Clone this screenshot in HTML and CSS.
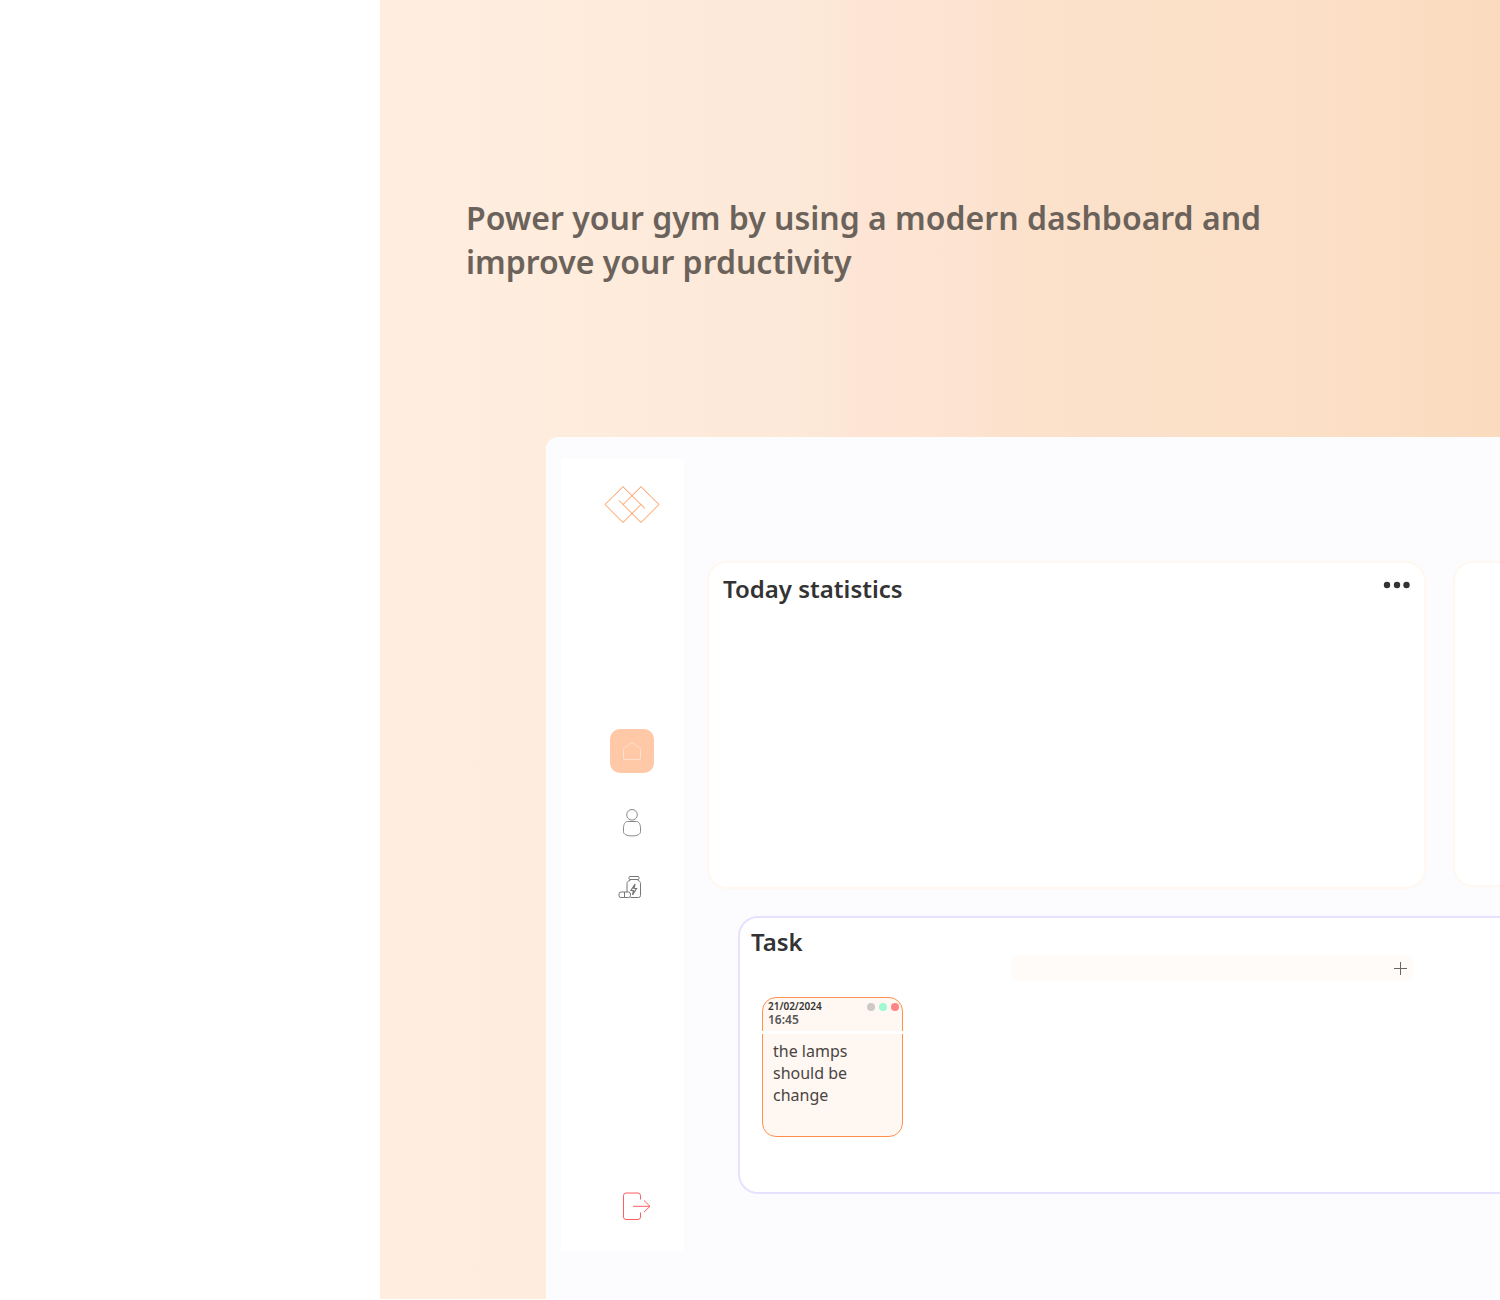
FILE: index.html
```html
<!DOCTYPE html>
<html lang="en">
<head>
<meta charset="utf-8">
<meta name="viewport" content="width=device-width, initial-scale=1">
<title>Gym dashboard</title>
<link rel="stylesheet" href="styles.css">
</head>
<body>
<div class="page">
  <div class="stage">
    <h1 class="headline">Power your gym by using a modern dashboard and improve your prductivity</h1>
    <div class="app">
      <aside class="sidebar">
        <a class="logo" href="#" aria-label="Home page">
          <svg width="56" height="38" viewBox="0 0 56 38" fill="none" stroke="#ff914d" stroke-width="1">
            <path d="M41 22.500L19 .7L1 18.500L19 36.500L37 18.500"/>
            <path d="M15 14.500L37 36.500L55 18.500L37 .7L19 18.500"/>
          </svg>
        </a>
        <nav class="nav">
          <a class="nav-link nav-active" href="#" aria-label="Home">
            <svg width="20" height="20" viewBox="0 0 20 20" fill="none" stroke="#ffe0cc" stroke-width="1">
              <path d="M1.500 7.500L9 2q1-.8 2 0l7.500 5.500v10q0 1-1 1h-15q-1 0-1-1z"/>
            </svg>
          </a>
          <a class="nav-link" href="#" aria-label="Members">
            <svg width="20" height="28" viewBox="0 0 20 28" fill="none" stroke="#888" stroke-width="1">
              <circle cx="10" cy="5.800" r="5.300"/>
              <path d="M5.500 12.500h9c2.500 0 4 3 4 6.700v3.500c0 2.500-3 4.200-8.500 4.200s-8.500-1.700-8.500-4.200v-3.500c0-3.700 1.500-6.700 4-6.700z"/>
            </svg>
          </a>
          <a class="nav-link" href="#" aria-label="Supplements">
            <svg class="bottle" width="24" height="24" viewBox="0 0 24 24" fill="none" stroke="#777" stroke-width="1">
              <rect x="11" y="1.500" width="10" height="3" rx="1"/>
              <path d="M12 4.500v1c-2 .3-3 1.500-3 3v8.500M20 4.500v1c1.500.3 2.500 1.500 2.500 3v12q0 2-2 2h-8"/>
              <path d="M17 9l-4 6.500h2.500l-1 4.500 4-6.500h-2.500z" stroke-width="1.200"/>
              <rect x="1" y="17" width="11.500" height="5.500" rx="2"/>
              <path d="M6.500 17v5.500"/>
            </svg>
          </a>
        </nav>
        <a class="logout" href="#" aria-label="Log out">
          <svg width="30" height="30" viewBox="0 0 30 30" fill="none" stroke="#ff5f62" stroke-width="1">
            <path d="M18.500 8.500v-4q0-2.500-2.500-2.500h-12q-2.500 0-2.500 2.500v21.500q0 2.500 2.500 2.500h12q2.500 0 2.500-2.500v-4.500"/>
            <path d="M11 15.300h17M22 9.500l6 5.800-6 5.800"/>
          </svg>
        </a>
      </aside>
      <main class="main">
        <div class="stats-row">
          <section class="card stats">
            <h2 class="card-title">Today statistics</h2>
            <button class="more" type="button" aria-label="More options">
              <svg width="28" height="8" viewBox="0 0 28 8" fill="#333">
                <circle cx="4" cy="4" r="3.200"/><circle cx="14" cy="4" r="3.200"/><circle cx="23.500" cy="4" r="3.200"/>
              </svg>
            </button>
          </section>
          <section class="card next-card"></section>
        </div>
        <section class="tasks">
          <div class="tasks-head">
            <h2 class="card-title">Task</h2>
            <form class="add-bar">
              <input class="add-input" type="text" aria-label="New task">
              <button class="add-button" type="button" aria-label="Add task">
                <svg width="14" height="14" viewBox="0 0 14 14" fill="none" stroke="#666" stroke-width="1"><path d="M7.500 1v13M1 7.500h13"/></svg>
              </button>
            </form>
          </div>
          <article class="note">
            <header class="note-head">
              <div class="note-when">
                <span class="note-date">21/02/2024</span>
                <span class="note-time">16:45</span>
              </div>
              <div class="dots">
                <span class="dot dot-gray"></span>
                <span class="dot dot-green"></span>
                <span class="dot dot-red"></span>
              </div>
            </header>
            <p class="note-text">the lamps should be change</p>
          </article>
        </section>
      </main>
    </div>
  </div>
</div>
</body>
</html>
```
FILE: styles.css
```css
* { box-sizing: border-box; }

body {
  margin: 0;
  background: #fff;
  color: #333;
  font-family: "Noto Sans", "Open Sans", sans-serif;
}

h1, h2, p { margin: 0; }
svg { display: block; }

.page {
  min-height: 100vh;
  padding: 0 0 1px 380px;
}

.stage {
  display: flex;
  flex-direction: column;
  min-height: calc(100vh - 1px);
  background: linear-gradient(90deg, #ffeee0 0%, #feecdd 16%, #fce8d7 40%, #fee4d4 43%, #fde4d2 52%, #fce2cc 56%, #fbdfc6 84%, #fadbbe 100%);
}

.headline {
  max-width: 920px;
  padding: 196px 0 0 86px;
  color: #6b635b;
  font-size: 32px;
  font-weight: 600;
  line-height: 44px;
}

.app {
  display: flex;
  flex: 1;
  margin: 153px 0 0 166px;
  padding: 22px 0 48px 15px;
  background: #fcfcff;
  border-top-left-radius: 12px;
}

.sidebar {
  display: flex;
  flex: 0 0 123px;
  flex-direction: column;
  align-items: center;
  padding: 27px 0 30px 19px;
  background: #fff;
}

.nav {
  display: flex;
  flex-direction: column;
  align-items: center;
  gap: 36px;
  margin-top: 205px;
}

.nav-link { min-height: 30px; }

.nav-active {
  display: grid;
  place-items: center;
  width: 44px;
  height: 44px;
  background: #ffc8a6;
  border-radius: 10px;
}

.bottle { margin-right: 5px; }

.logout {
  margin-top: auto;
  padding-left: 9px;
}

.main {
  flex: 1;
  min-width: 0;
  padding: 102px 0 0 23px;
}

.stats-row {
  display: flex;
  gap: 27px;
}

.card {
  min-height: 328px;
  background: #fff;
  border: 2px solid #fff8f0;
  border-radius: 20px;
}

.stats {
  display: flex;
  flex: 1;
  align-items: flex-start;
  justify-content: space-between;
  padding: 10px 13px 0 14px;
}

.next-card {
  flex: 0 0 47px;
  min-height: 326px;
  align-self: flex-start;
  border-right: 0;
  border-radius: 20px 0 0 20px;
}

.card-title {
  font-size: 24px;
  font-weight: 600;
  line-height: 32px;
}

button {
  padding: 0;
  background: none;
  border: 0;
}

.more { margin-top: 8px; }

.tasks {
  min-height: 278px;
  margin: 27px 0 0 31px;
  padding: 8px 0 0 11px;
  background: #fff;
  border: 2px solid #e8e0ff;
  border-right: 0;
  border-radius: 20px 0 0 20px;
}

.tasks-head {
  display: flex;
  align-items: flex-start;
  justify-content: space-between;
  padding-right: 86px;
}

.add-bar {
  display: flex;
  align-items: center;
  width: 403px;
  height: 28px;
  margin-top: 28px;
  padding-right: 7px;
  background: #fffbf8;
  border-radius: 8px;
}

.add-input {
  flex: 1;
  min-width: 0;
  background: none;
  border: 0;
  font: inherit;
}

.note {
  width: 141px;
  min-height: 140px;
  margin: 15px 0 0 11px;
  background: #fff7f2;
  border: 1px solid #ff914d;
  border-radius: 14px;
}

.note-head {
  display: flex;
  justify-content: space-between;
  height: 36px;
  margin: 0 -1px;
  padding: 1px 4px 0 6px;
  border-bottom: 3px solid #fff;
}

.note-when {
  display: flex;
  flex-direction: column;
  font-weight: 600;
}

.note-date {
  font-size: 10px;
  line-height: 14px;
}

.note-time {
  color: #555;
  font-size: 12px;
  line-height: 14px;
}

.dots {
  display: flex;
  gap: 4px;
  padding-top: 4px;
}

.dot {
  width: 8px;
  height: 8px;
  border-radius: 50%;
}

.dot-gray { background: #cfc9c6; }
.dot-green { background: #9ff9d2; }
.dot-red { background: #ff8585; }

.note-text {
  max-width: 110px;
  padding: 6px 0 0 10px;
  color: #4a4542;
  font-size: 16px;
  line-height: 22px;
}
```
